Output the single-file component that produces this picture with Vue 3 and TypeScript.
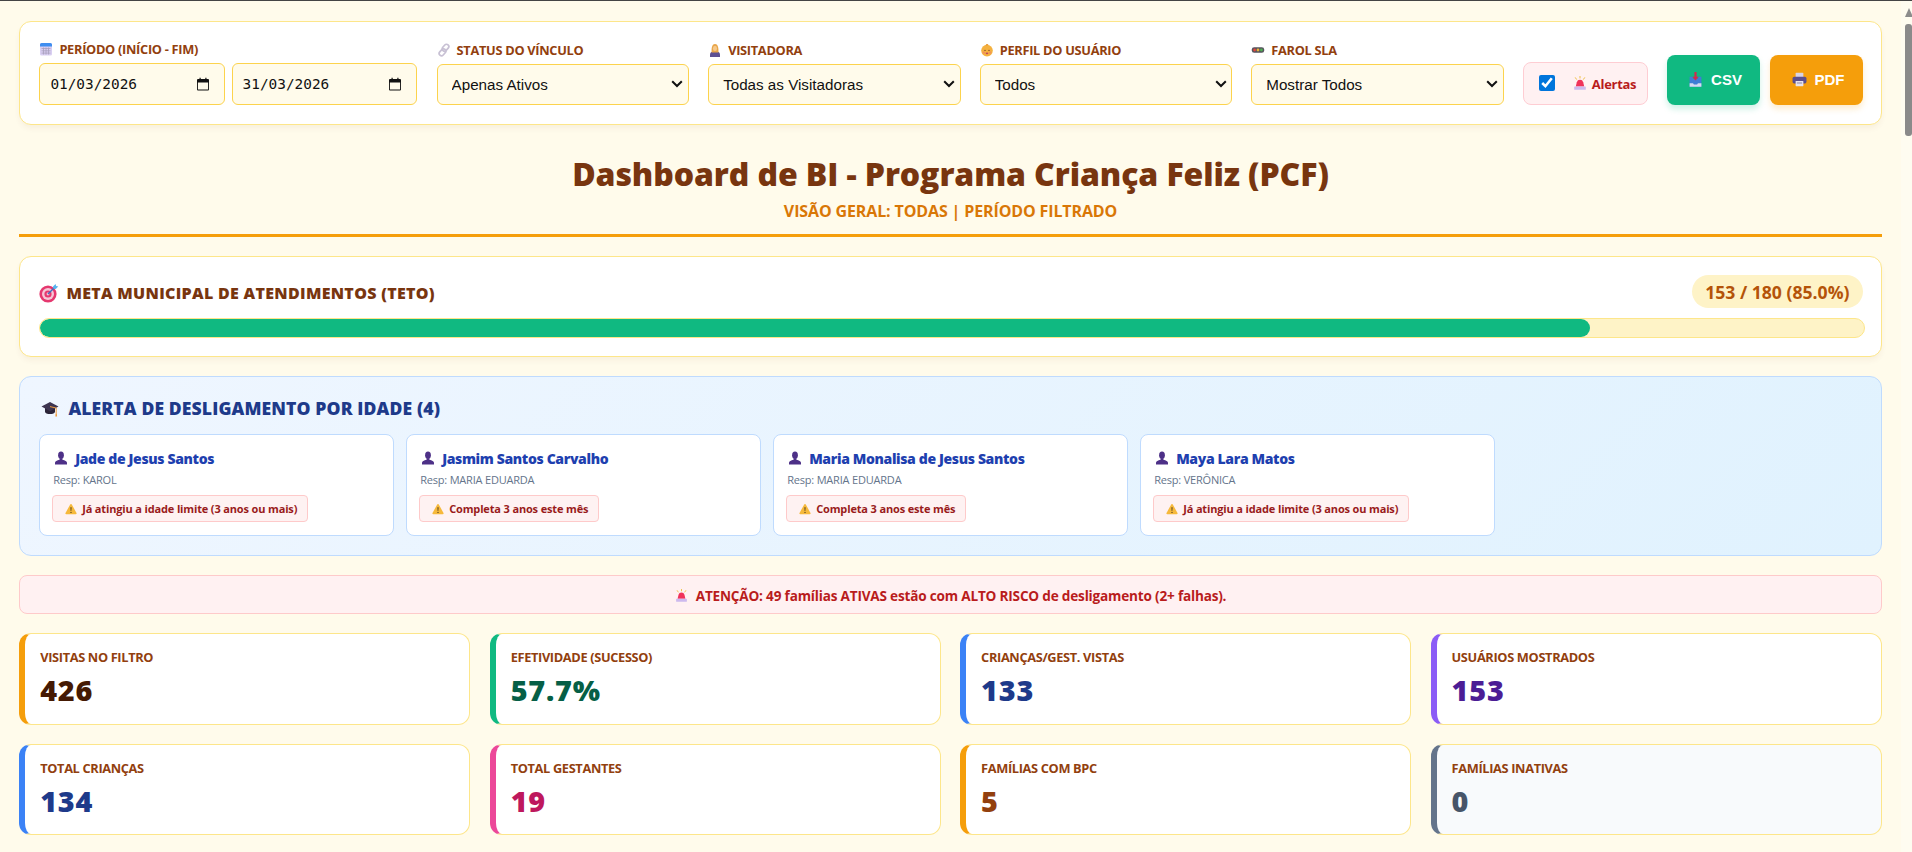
<script setup lang="ts">
interface Filter { icon: string; label: string; value: string; options: string[] }
interface Person { name: string; resp: string; note: string }
interface Kpi { label: string; value: string; accent: string; color: string; muted?: boolean }

const filters: Filter[] = [
  { icon: 'i-link', label: 'STATUS DO VÍNCULO', value: 'Apenas Ativos', options: ['Apenas Ativos', 'Todos'] },
  { icon: 'i-woman', label: 'VISITADORA', value: 'Todas as Visitadoras', options: ['Todas as Visitadoras', 'KAROL', 'MARIA EDUARDA', 'VERÔNICA'] },
  { icon: 'i-baby', label: 'PERFIL DO USUÁRIO', value: 'Todos', options: ['Todos', 'Crianças', 'Gestantes'] },
  { icon: 'i-traffic', label: 'FAROL SLA', value: 'Mostrar Todos', options: ['Mostrar Todos'] },
]

const people: Person[] = [
  { name: 'Jade de Jesus Santos', resp: 'KAROL', note: 'Já atingiu a idade limite (3 anos ou mais)' },
  { name: 'Jasmim Santos Carvalho', resp: 'MARIA EDUARDA', note: 'Completa 3 anos este mês' },
  { name: 'Maria Monalisa de Jesus Santos', resp: 'MARIA EDUARDA', note: 'Completa 3 anos este mês' },
  { name: 'Maya Lara Matos', resp: 'VERÔNICA', note: 'Já atingiu a idade limite (3 anos ou mais)' },
]

const kpis: Kpi[] = [
  { label: 'VISITAS NO FILTRO', value: '426', accent: '#f59e0b', color: '#451a03' },
  { label: 'EFETIVIDADE (SUCESSO)', value: '57.7%', accent: '#10b981', color: '#065f46' },
  { label: 'CRIANÇAS/GEST. VISTAS', value: '133', accent: '#3b82f6', color: '#1e3a8a' },
  { label: 'USUÁRIOS MOSTRADOS', value: '153', accent: '#8b5cf6', color: '#4c1d95' },
  { label: 'TOTAL CRIANÇAS', value: '134', accent: '#3b82f6', color: '#1e3a8a' },
  { label: 'TOTAL GESTANTES', value: '19', accent: '#ec4899', color: '#be185d' },
  { label: 'FAMÍLIAS COM BPC', value: '5', accent: '#f59e0b', color: '#92400e' },
  { label: 'FAMÍLIAS INATIVAS', value: '0', accent: '#64748b', color: '#475569', muted: true },
]

const progress = 85
</script>

<template>
  <svg class="sprite" aria-hidden="true">
    <symbol id="i-cal" viewBox="0 0 14 14">
      <rect x="1" y="1" width="12" height="12.5" rx="1.6" fill="#d9cff2" />
      <path d="M1 4.6V2.6A1.6 1.6 0 0 1 2.6 1h8.8A1.6 1.6 0 0 1 13 2.6v2z" fill="#3f8ef0" />
      <path d="M2.5 6.5h9M2.5 8.8h9M2.5 11.1h9M4.5 5.5v7M7 5.5v7M9.5 5.5v7" stroke="#a8a0bc" stroke-width=".8" fill="none" />
    </symbol>
    <symbol id="i-link" viewBox="0 0 14 14">
      <g fill="none" stroke="#c8c1d4" stroke-width="1.7">
        <rect x="6.2" y=".9" width="4.6" height="7.6" rx="2.3" transform="rotate(42 8.5 4.7)" />
        <rect x="3.2" y="5.5" width="4.6" height="7.6" rx="2.3" transform="rotate(42 5.5 9.3)" />
      </g>
    </symbol>
    <symbol id="i-woman" viewBox="0 0 14 14">
      <path d="M2 14v-2.6C2 9.2 4 8.2 7 8.2s5 1 5 3.2V14z" fill="#5d4f92" />
      <path d="M3.6 9.4C3.4 6 3.6 1 7 1s3.6 5 3.4 8.4z" fill="#e8a548" />
      <ellipse cx="7" cy="5.4" rx="2.1" ry="2.6" fill="#f6c98b" />
    </symbol>
    <symbol id="i-baby" viewBox="0 0 14 14">
      <circle cx="7" cy="7.6" r="5.8" fill="#f4b13f" />
      <path d="M5.6 2.4C6 .9 8 .6 8.6 1.6 8 1.7 7.5 2 7.4 2.6z" fill="#e8962c" />
      <circle cx="4" cy="9.6" r="1.2" fill="#f18f5f" />
      <circle cx="10" cy="9.6" r="1.2" fill="#f18f5f" />
      <circle cx="5" cy="7.4" r=".7" fill="#7a4a1c" />
      <circle cx="9" cy="7.4" r=".7" fill="#7a4a1c" />
      <ellipse cx="7" cy="10.4" rx="1.3" ry=".8" fill="#c0455f" />
    </symbol>
    <symbol id="i-traffic" viewBox="0 0 14 14">
      <rect x=".8" y="4.2" width="12.4" height="5.6" rx="2.4" fill="#55535c" />
      <circle cx="3.6" cy="7" r="1.4" fill="#e2453f" />
      <circle cx="7" cy="7" r="1.4" fill="#e6b23a" />
      <circle cx="10.4" cy="7" r="1.4" fill="#4eae52" />
    </symbol>
    <symbol id="i-siren" viewBox="0 0 14 14">
      <path d="M7 0v2.4M2.2 1.4l1.5 2.2M11.8 1.4l-1.5 2.2" stroke="#f0c044" stroke-width="1" fill="none" />
      <path d="M2.8 10.6 3.8 6.2a3.3 3.3 0 0 1 6.4 0l1 4.4z" fill="#f0325a" />
      <rect x="1.2" y="10.4" width="11.6" height="3.4" rx=".6" fill="#cdb9ee" />
    </symbol>
    <symbol id="i-inbox" viewBox="0 0 14 14">
      <path d="M1.5 4.4h3v1.8h5V4.4h3v9.4h-11z" fill="#3f7dd6" />
      <path d="M1.5 10.6h3.2l.8 1h3l.8-1h3.2v3.2h-11z" fill="#d4dcf0" />
      <path d="M6 0h2v4.4h2L7 8 4 4.4h2z" fill="#d5284f" />
    </symbol>
    <symbol id="i-print" viewBox="0 0 14 14">
      <rect x="3.4" y=".8" width="7.2" height="4.4" rx=".6" fill="#d8d2e4" />
      <rect x=".5" y="4.4" width="13" height="6.4" rx="1.6" fill="#5c4f8c" />
      <rect x="3.4" y="8.4" width="7.2" height="4.8" rx=".4" fill="#e7e3ee" />
      <rect x="4.6" y="9.8" width="4.8" height=".9" fill="#8b84a0" />
    </symbol>
    <symbol id="i-target" viewBox="0 0 20 20">
      <circle cx="9" cy="11" r="8.6" fill="#e5386f" />
      <circle cx="9" cy="11" r="6" fill="#f6c6d6" />
      <circle cx="9" cy="11" r="3.6" fill="#e5386f" />
      <circle cx="9" cy="11" r="1.4" fill="#f6c6d6" />
      <path d="M9 11 16 4" stroke="#3f6fbf" stroke-width="1.4" />
      <path d="M14 3.6 16.6 1l.5 2 2.2.4-2.6 2.6-2.4-.4z" fill="#57b5f0" />
    </symbol>
    <symbol id="i-cap" viewBox="0 0 18 18">
      <path d="M4 8.5v4.2c0 1.4 2.4 2.4 5 2.4s5-1 5-2.4V8.5z" fill="#2b2438" />
      <path d="M9 3 17.5 7.6 9 12.2.5 7.6z" fill="#3d3550" />
      <path d="M9 7.6 15.2 9v6.4" stroke="#ef9a3c" stroke-width="1" fill="none" />
      <path d="M14.6 15h1.2l.3 2.4h-1.8z" fill="#ef9a3c" />
    </symbol>
    <symbol id="i-bust" viewBox="0 0 14 14">
      <ellipse cx="7" cy="4.2" rx="2.9" ry="3.7" fill="#4d3087" />
      <path d="M5.6 7.4h2.8v1.4C11 9.3 13 10.4 13 11.8V13.6H1v-1.8C1 10.4 3 9.3 5.6 8.8z" fill="#4d3087" />
    </symbol>
    <symbol id="i-warn" viewBox="0 0 14 14">
      <path d="M7 1.2c.5 0 .8.3 1.1.8l5.3 9.6c.4.8 0 1.5-.9 1.5H1.5c-.9 0-1.3-.7-.9-1.5L5.9 2c.3-.5.6-.8 1.1-.8z" fill="#f6b93b" />
      <path d="M6.3 5h1.4l-.3 4.4h-.8z" fill="#5b4420" />
      <circle cx="7" cy="11" r=".8" fill="#5b4420" />
    </symbol>
  </svg>

  <div class="shell">
    <main class="page">
      <section class="toolbar card">
        <div class="field field-dates">
          <label class="flabel"><svg class="ico"><use href="#i-cal" /></svg>PERÍODO (INÍCIO - FIM)</label>
          <div class="dates">
            <div class="date">
              <input class="date-text" type="text" value="01/03/2026" readonly />
              <svg class="date-ico" viewBox="0 0 14 14"><path d="M2 2h1.5V.8h1.2V2h4.6V.8h1.2V2H12a1 1 0 0 1 1 1v9.6a1 1 0 0 1-1 1H2a1 1 0 0 1-1-1V3a1 1 0 0 1 1-1zm-.1 3.4v7.2h10.2V5.4z" fill="#111" /></svg>
            </div>
            <div class="date">
              <input class="date-text" type="text" value="31/03/2026" readonly />
              <svg class="date-ico" viewBox="0 0 14 14"><path d="M2 2h1.5V.8h1.2V2h4.6V.8h1.2V2H12a1 1 0 0 1 1 1v9.6a1 1 0 0 1-1 1H2a1 1 0 0 1-1-1V3a1 1 0 0 1 1-1zm-.1 3.4v7.2h10.2V5.4z" fill="#111" /></svg>
            </div>
          </div>
        </div>

        <div v-for="f in filters" :key="f.label" class="field field-select">
          <label class="flabel"><svg class="ico"><use :href="'#' + f.icon" /></svg>{{ f.label }}</label>
          <select class="select" :value="f.value">
            <option v-for="o in f.options" :key="o">{{ o }}</option>
          </select>
        </div>

        <label class="alert-toggle">
          <input type="checkbox" checked />
          <svg class="ico siren"><use href="#i-siren" /></svg>
          <span>Alertas</span>
        </label>

        <div class="actions">
          <button class="btn btn-csv" type="button"><svg class="btn-ico"><use href="#i-inbox" /></svg>CSV</button>
          <button class="btn btn-pdf" type="button"><svg class="btn-ico"><use href="#i-print" /></svg>PDF</button>
        </div>
      </section>

      <header class="head">
        <h1>Dashboard de BI - Programa Criança Feliz (PCF)</h1>
        <p>VISÃO GERAL: TODAS | PERÍODO FILTRADO</p>
      </header>

      <section class="goal card">
        <div class="goal-row">
          <h2><svg class="goal-ico"><use href="#i-target" /></svg>META MUNICIPAL DE ATENDIMENTOS (TETO)</h2>
          <span class="badge">153 / 180 (85.0%)</span>
        </div>
        <div class="track"><div class="fill" :style="{ width: progress + '%' }"></div></div>
      </section>

      <section class="age">
        <h2><svg class="cap"><use href="#i-cap" /></svg>ALERTA DE DESLIGAMENTO POR IDADE (4)</h2>
        <div class="age-grid">
          <article v-for="p in people" :key="p.name" class="person">
            <div class="pname"><svg class="bust"><use href="#i-bust" /></svg>{{ p.name }}</div>
            <div class="presp">Resp: {{ p.resp }}</div>
            <div class="ptag"><svg class="warn"><use href="#i-warn" /></svg>{{ p.note }}</div>
          </article>
        </div>
      </section>

      <div class="risk"><svg class="ico"><use href="#i-siren" /></svg>ATENÇÃO: 49 famílias ATIVAS estão com ALTO RISCO de desligamento (2+ falhas).</div>

      <section class="kpis">
        <article
          v-for="k in kpis"
          :key="k.label"
          class="kpi"
          :class="{ muted: k.muted }"
          :style="{ borderLeftColor: k.accent }"
        >
          <div class="klabel">{{ k.label }}</div>
          <div class="kvalue" :style="{ color: k.color }">{{ k.value }}</div>
        </article>
      </section>
    </main>

    <aside class="rail" aria-hidden="true">
      <div class="rail-arrow"></div>
      <div class="rail-thumb"></div>
    </aside>
  </div>
</template>

<style>
html, body { margin: 0; background: #fffbeb; overflow: hidden; }
</style>

<style scoped>
* { box-sizing: border-box; }
.sprite { width: 0; height: 0; display: block; overflow: hidden; }

.shell {
  height: 852px;
  display: flex;
  overflow: hidden;
  border-top: 1px solid #444;
  background: #fffbeb;
  font-family: "Open Sans", "Noto Sans", sans-serif;
}
.page {
  flex: 1;
  min-width: 0;
  padding: 20.2px 19.2px 19.2px;
  display: flex;
  flex-direction: column;
  gap: 19.2px;
}
.rail {
  width: 11px;
  flex: none;
  background: #fefcf0;
  padding: 7px 0 0 4px;
  display: flex;
  flex-direction: column;
  gap: 7px;
}
.rail-arrow {
  width: 0;
  height: 0;
  border-left: 4px solid transparent;
  border-right: 4px solid transparent;
  border-bottom: 9px solid #8c8c8c;
}
.rail-thumb {
  width: 7px;
  height: 112px;
  border-radius: 3px;
  background: #8a8a8a;
}

.card {
  background: #fff;
  border: 1px solid #fde68a;
  border-radius: 12px;
  box-shadow: 0 4px 6px -1px rgba(120, 53, 15, 0.06);
}

.toolbar {
  display: flex;
  align-items: flex-end;
  gap: 19.2px;
  padding: 19.2px 17.8px 19.2px 19.2px;
  height: 103.5px;
  flex: none;
}
.field { display: flex; flex-direction: column; }
.field-dates { flex: none; width: 378px; }
.field-select { flex: 1; min-width: 0; }
.flabel {
  display: flex;
  align-items: center;
  height: 14px;
  margin-bottom: 7px;
  font-size: 12.8px;
  font-weight: 700;
  letter-spacing: -0.3px;
  color: #92400e;
  white-space: nowrap;
}
.ico { width: 14px; height: 14px; margin-right: 6px; flex: none; }
.dates { display: flex; gap: 6.4px; }
.date {
  flex: 1;
  min-width: 0;
  height: 42px;
  display: flex;
  align-items: center;
  padding-right: 14px;
  background: #fffbeb;
  border: 1px solid #fcd34d;
  border-radius: 6px;
}
.date-text {
  flex: 1;
  width: 0;
  min-width: 0;
  height: 100%;
  border: 0;
  outline: 0;
  padding: 0 0 0 10px;
  background: transparent;
  font-family: "DejaVu Sans Mono", monospace;
  font-size: 14.4px;
  color: #111;
}
.date-ico { width: 14px; height: 14px; flex: none; }
.select {
  width: 100%;
  height: 41px;
  padding: 0 20px 0 14px;
  appearance: none;
  background-color: #fffbeb;
  background-image: url("data:image/svg+xml,%3Csvg xmlns='http://www.w3.org/2000/svg' viewBox='0 0 12 8'%3E%3Cpath d='M1.2 1.2 6 6l4.8-4.8' fill='none' stroke='%23111' stroke-width='2'/%3E%3C/svg%3E");
  background-repeat: no-repeat;
  background-size: 12px 8px;
  background-position: right 4.5px center;
  border: 1px solid #fcd34d;
  border-radius: 6px;
  font-family: "Liberation Sans", Arial, sans-serif;
  font-size: 15.2px;
  color: #111;
}
.alert-toggle {
  flex: none;
  width: 125px;
  height: 43px;
  display: flex;
  align-items: center;
  padding-left: 15px;
  background: #fff1f2;
  border: 1px solid #fecdd3;
  border-radius: 8px;
  font-size: 13px;
  font-weight: 700;
  letter-spacing: -0.3px;
  color: #b91c1c;
  white-space: nowrap;
}
.alert-toggle input { width: 16px; height: 16px; margin: 0 18px 0 0; accent-color: #0075db; }
.alert-toggle .siren { margin-right: 5px; }
.alert-toggle span { margin-top: 2px; }
.actions { display: flex; gap: 10px; flex: none; }
.btn {
  width: 93px;
  height: 50px;
  border: 0;
  border-radius: 8px;
  color: #fff;
  font-family: "Liberation Sans", Arial, sans-serif;
  font-size: 15px;
  font-weight: 700;
  display: flex;
  align-items: center;
  justify-content: center;
  gap: 8px;
  padding: 0 0 0 3px;
}
.btn-ico { width: 15px; height: 15px; }
.btn-csv { background: #10b981; box-shadow: 0 4px 6px rgba(16, 185, 129, 0.2); }
.btn-pdf { background: #f59e0b; box-shadow: 0 4px 6px rgba(245, 158, 11, 0.2); }

.head {
  flex: none;
  height: 93px;
  border-bottom: 3px solid #f59e0b;
  text-align: center;
}
.head h1 {
  margin: 10px 0 0;
  font-size: 32px;
  line-height: 40px;
  font-weight: 800;
  letter-spacing: -0.1px;
  color: #78350f;
}
.head p {
  margin: 7px 0 0;
  font-size: 16px;
  line-height: 20px;
  font-weight: 700;
  letter-spacing: -0.13px;
  color: #d97706;
}

.goal { flex: none; height: 100.8px; padding: 18.4px 18px 0 19.2px; }
.goal-row { display: flex; align-items: center; justify-content: space-between; height: 33px; }
.goal h2 {
  margin: 0;
  padding-top: 2px;
  display: flex;
  align-items: center;
  font-size: 16px;
  font-weight: 800;
  letter-spacing: 0.3px;
  color: #78350f;
}
.goal-ico { width: 20px; height: 20px; margin-right: 7px; }
.badge {
  height: 33px;
  width: 171px;
  display: flex;
  align-items: center;
  justify-content: center;
  background: #fef3c7;
  border-radius: 20px;
  font-size: 17.6px;
  font-weight: 700;
  color: #b45309;
  white-space: nowrap;
}
.track {
  width: calc(100% + 2px);
  height: 20px;
  margin-top: 9.2px;
  background: #fef3c7;
  border: 1px solid #fde68a;
  border-radius: 10px;
  overflow: hidden;
}
.fill { height: 100%; background: #10b981; border-radius: 10px; }

.age {
  flex: none;
  height: 180px;
  padding: 19.2px;
  background: linear-gradient(135deg, #eff6ff, #e0f2fe);
  border: 1px solid #bfdbfe;
  border-radius: 12px;
}
.age h2 {
  margin: 0;
  height: 24px;
  display: flex;
  align-items: center;
  font-size: 17.6px;
  font-weight: 800;
  letter-spacing: 0.1px;
  color: #1e3a8a;
}
.cap { width: 18px; height: 18px; margin: 0 9px 0 2px; }
.age-grid {
  display: grid;
  grid-template-columns: repeat(auto-fill, minmax(350px, 1fr));
  gap: 12.8px;
  margin-top: 14px;
}
.person {
  height: 102px;
  padding: 12.8px;
  background: #fff;
  border: 1px solid #bfdbfe;
  border-radius: 8px;
}
.pname {
  display: flex;
  align-items: center;
  height: 20px;
  font-size: 14px;
  font-weight: 800;
  letter-spacing: -0.36px;
  color: #1e40af;
  white-space: nowrap;
}
.bust { width: 14px; height: 14px; margin: 0 7px 0 1px; }
.presp {
  margin-top: 4px;
  height: 16px;
  line-height: 16px;
  font-size: 11px;
  letter-spacing: -0.2px;
  color: #64748b;
}
.ptag {
  display: inline-flex;
  align-items: center;
  height: 27px;
  margin-top: 7px;
  margin-left: -1px;
  padding: 0 10px 0 12px;
  background: #fef2f2;
  border: 1px solid #fecaca;
  border-radius: 4px;
  font-size: 11px;
  font-weight: 700;
  letter-spacing: -0.15px;
  color: #991b1b;
  white-space: nowrap;
}
.warn { width: 12px; height: 12px; margin-right: 5px; }

.risk {
  flex: none;
  height: 38.8px;
  padding-top: 1px;
  display: flex;
  align-items: center;
  justify-content: center;
  background: #fff1f2;
  border: 1px solid #fecaca;
  border-radius: 8px;
  font-size: 13.6px;
  font-weight: 700;
  letter-spacing: -0.2px;
  color: #b91c1c;
}
.risk .ico { width: 13px; height: 13px; margin-right: 8px; }

.kpis {
  flex: none;
  display: grid;
  grid-template-columns: repeat(4, 1fr);
  gap: 19.2px;
}
.kpi {
  height: 91.4px;
  padding: 13px 15px 0;
  background: #fff;
  border: 1px solid #fde68a;
  border-left: 6px solid;
  border-radius: 12px;
}
.kpi.muted { background: #f8fafc; }
.klabel {
  height: 20px;
  line-height: 20px;
  font-size: 12.8px;
  font-weight: 700;
  letter-spacing: -0.35px;
  color: #92400e;
  white-space: nowrap;
}
.kvalue {
  margin-top: 3px;
  line-height: 40px;
  font-size: 28.8px;
  font-weight: 800;
  letter-spacing: 0.8px;
}
</style>
